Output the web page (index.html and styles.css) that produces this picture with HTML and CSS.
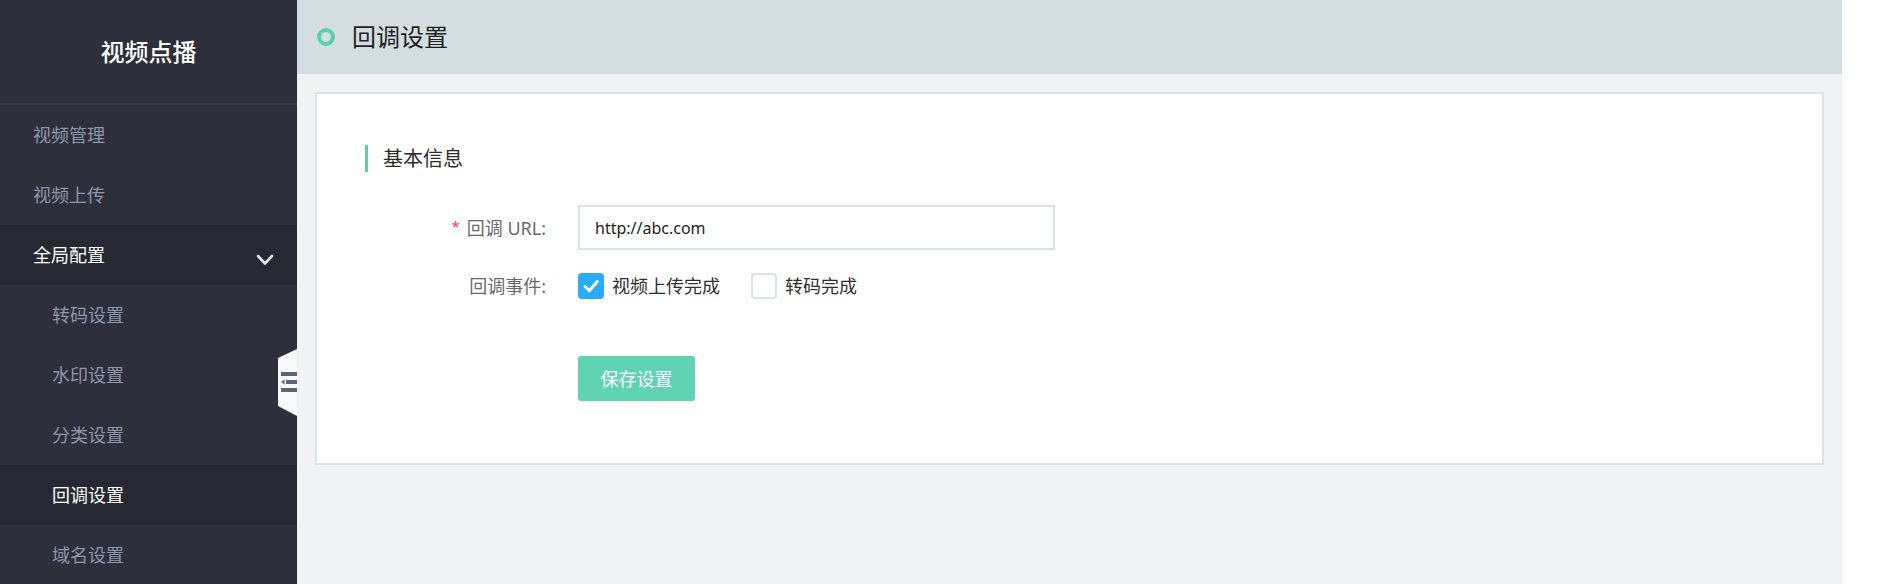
FILE: index.html
```html
<!DOCTYPE html>
<html lang="zh-CN">
<head>
<meta charset="utf-8">
<title>回调设置</title>
<link rel="stylesheet" href="styles.css">
</head>
<body>
<div class="app">
  <aside class="sidebar">
    <div class="brand">视频点播</div>
    <nav class="menu">
      <div class="menu-item">视频管理</div>
      <div class="menu-item">视频上传</div>
      <div class="menu-item open">
        <span>全局配置</span>
        <svg class="chevron" width="18" height="12" viewBox="0 0 18 12"><polyline points="2,2 9,9.5 16,2" fill="none" stroke="#e3e6ec" stroke-width="2.6" stroke-linecap="round" stroke-linejoin="round"/></svg>
      </div>
      <div class="menu-item sub">转码设置</div>
      <div class="menu-item sub">水印设置</div>
      <div class="menu-item sub">分类设置</div>
      <div class="menu-item sub active">回调设置</div>
      <div class="menu-item sub">域名设置</div>
    </nav>
    <svg class="collapse-tab" width="19" height="67" viewBox="0 0 19 67">
      <polygon points="0,9 19,0 19,67 0,57" fill="#f8f9fb"/>
      <rect x="3" y="23" width="16" height="4" fill="#5b6579"/>
      <polygon points="3,33 6.5,30.5 6.5,35.5" fill="#5b6579"/>
      <rect x="8" y="31" width="11" height="4" fill="#5b6579"/>
      <rect x="3" y="39" width="16" height="4" fill="#5b6579"/>
    </svg>
  </aside>
  <main class="main">
    <header class="topbar">
      <span class="ring"></span>
      <h1 class="page-title">回调设置</h1>
    </header>
    <section class="content">
      <div class="card">
        <h2 class="section-title">基本信息</h2>
        <div class="form-row">
          <label class="form-label"><span class="req">*</span>回调 URL:</label>
          <input class="text-input" type="text" value="http://abc.com">
        </div>
        <div class="form-row">
          <span class="form-label">回调事件:</span>
          <div class="checks">
            <span class="cb checked"><svg width="26" height="26" viewBox="0 0 26 26"><polyline points="7,13.5 11.3,17.8 19.3,8.5" fill="none" stroke="#fff" stroke-width="3" stroke-linecap="round" stroke-linejoin="round"/></svg></span>
            <span class="cb-label">视频上传完成</span>
            <span class="cb second"></span>
            <span class="cb-label">转码完成</span>
          </div>
        </div>
        <div class="form-row actions">
          <button class="btn-save" type="button">保存设置</button>
        </div>
      </div>
    </section>
  </main>
</div>
</body>
</html>
```
FILE: styles.css
```css
html, body {
  margin: 0;
  padding: 0;
  background: #ffffff;
}

body {
  font-family: "Noto Sans", "Noto Sans CJK SC", sans-serif;
}

.app {
  display: flex;
  width: 1842px;
  height: 584px;
  overflow: hidden;
}

.sidebar {
  position: relative;
  flex: none;
  width: 297px;
  background: #2d2f3b;
}

.brand {
  height: 103px;
  border-bottom: 2px solid #363946;
  display: flex;
  align-items: center;
  justify-content: center;
  color: #ffffff;
  font-size: 24px;
  font-weight: 500;
  line-height: 1;
}

.menu-item {
  height: 60px;
  display: flex;
  align-items: center;
  padding-left: 33px;
  font-size: 18px;
  line-height: 1;
  color: #8d97ac;
}

.menu-item.sub {
  padding-left: 52px;
}

.menu-item.open {
  justify-content: space-between;
  padding-right: 23px;
  background: #262832;
  color: #ffffff;
}

.menu-item.active {
  background: #262832;
  color: #ffffff;
}

.chevron {
  display: block;
  margin-top: 10px;
}

.collapse-tab {
  position: absolute;
  right: 0;
  top: 349px;
  display: block;
}

.main {
  flex: 1;
  display: flex;
  flex-direction: column;
  background: #f1f2f4;
}

.topbar {
  height: 74px;
  flex: none;
  display: flex;
  align-items: center;
  gap: 17px;
  padding-left: 20px;
  background: #d4dde0;
}

.ring {
  width: 18px;
  height: 18px;
  box-sizing: border-box;
  border: 4px solid #5dcfb1;
  border-radius: 50%;
}

.page-title {
  margin: 0;
  font-size: 24px;
  font-weight: normal;
  line-height: 1;
  color: #1c1f24;
}

.content {
  padding: 18px;
}

.card {
  background: #ffffff;
  border: 2px solid #dae2ea;
  padding: 51px 48px 62px;
}

.section-title {
  margin: 0 0 33px;
  height: 27px;
  border-left: 3px solid #5dcfb1;
  padding-left: 15px;
  font-size: 20px;
  font-weight: normal;
  line-height: 27px;
  color: #2b2b2b;
}

.form-row {
  display: flex;
  align-items: center;
  height: 45px;
  margin-bottom: 13px;
}

.form-row + .form-row {
  margin-bottom: 48px;
}

.form-row.actions {
  margin-bottom: 0;
  padding-left: 213px;
}

.form-label {
  width: 181px;
  margin-right: 32px;
  text-align: right;
  font-size: 18px;
  line-height: 1;
  color: #6a6a6a;
}

.req {
  color: #f2475b;
  font-size: 15px;
  margin-right: 7px;
  position: relative;
  top: -3px;
}

.text-input {
  width: 477px;
  height: 45px;
  box-sizing: border-box;
  border: 2px solid #dae1e9;
  border-radius: 0;
  padding: 0 15px;
  font-family: "Noto Sans", "Noto Sans CJK SC", sans-serif;
  font-size: 16px;
  color: #222222;
  outline: none;
}

.checks {
  display: flex;
  align-items: center;
}

.cb {
  display: block;
  width: 26px;
  height: 26px;
  box-sizing: border-box;
  border-radius: 4px;
  flex: none;
}

.cb svg {
  display: block;
}

.cb.checked {
  background: #2aabfa;
}

.cb.second {
  border: 2px solid #dbe2ea;
  margin-left: 31px;
}

.cb-label {
  margin-left: 8px;
  font-size: 18px;
  line-height: 1;
  color: #2f2f2f;
}

.btn-save {
  width: 117px;
  height: 45px;
  border: none;
  border-radius: 3px;
  background: #60d3b5;
  color: #ffffff;
  font-family: "Noto Sans", "Noto Sans CJK SC", sans-serif;
  font-size: 18px;
  line-height: 1;
  padding: 0;
}
```
